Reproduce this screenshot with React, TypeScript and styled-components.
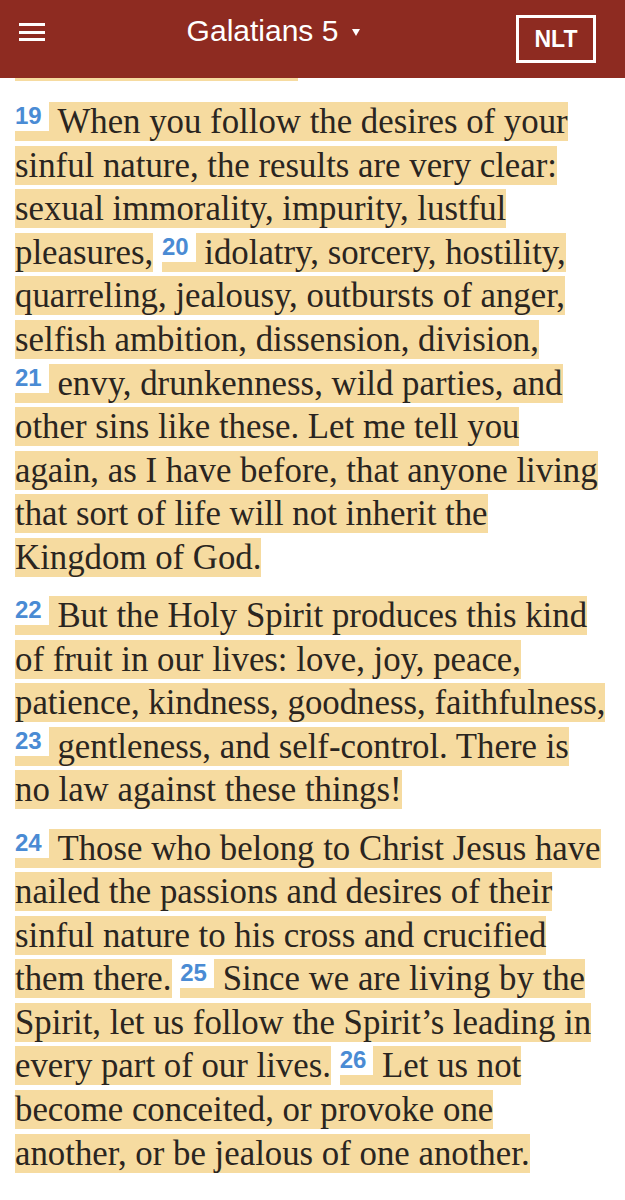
import styled, { createGlobalStyle } from 'styled-components';

const GlobalStyle = createGlobalStyle`
  body {
    margin: 0;
    background: #fff;
  }
`;

const Page = styled.div`
  width: 625px;
  min-height: 1200px;
  background: #fff;
  overflow: hidden;
`;

const Header = styled.header`
  height: 78px;
  background-color: #8e2b21;
  display: flex;
  align-items: flex-start;
  justify-content: space-between;
  padding: 0 29px 0 19px;
  box-sizing: border-box;
  color: #fff;
`;

const MenuButton = styled.div`
  width: 26px;
  height: 18px;
  margin-top: 23px;
  display: flex;
  flex-direction: column;
  justify-content: space-between;

  span {
    display: block;
    height: 3px;
    background: #fff;
  }
`;

const Title = styled.div`
  font-family: "Liberation Sans", Arial, sans-serif;
  font-size: 30px;
  margin-top: 14px;
  margin-right: 14px;
  display: flex;
  align-items: center;
  gap: 14px;
`;

const Caret = styled.span`
  width: 0;
  height: 0;
  border-left: 4px solid transparent;
  border-right: 4px solid transparent;
  border-top: 7px solid #fff;
  margin-top: 2px;
`;

const VersionBox = styled.div`
  width: 80px;
  height: 48px;
  margin-top: 15px;
  box-sizing: border-box;
  border: 3px solid #fff;
  display: flex;
  align-items: center;
  justify-content: center;
  font-family: "Liberation Sans", Arial, sans-serif;
  font-weight: bold;
  font-size: 23px;
`;

const PrevLine = styled.div`
  width: 283px;
  height: 3px;
  margin-left: 15px;
  background: #f6dba0;
`;

const Content = styled.main`
  padding: 19px 15px 0 15px;
  font-family: "Liberation Serif", "Times New Roman", serif;
  font-size: 34.8px;
  line-height: 43.6px;
  color: #2a2520;
`;

const Paragraph = styled.p`
  margin: 0 0 14.5px 0;
`;

const Verse = styled.span`
  background: #f6dba0;
`;

const Num = styled.span`
  font-family: "Liberation Sans", Arial, sans-serif;
  font-weight: bold;
  font-size: 24px;
  line-height: 0;
  color: #4a8bd4;
  background: #fff;
  vertical-align: 9px;
  padding: 2px 7px 2px 0;
`;

type VerseData = { n: number; text: string };

const paragraphs: VerseData[][] = [
  [
    { n: 19, text: 'When you follow the desires of your sinful nature, the results are very clear: sexual immorality, impurity, lustful pleasures,' },
    { n: 20, text: 'idolatry, sorcery, hostility, quarreling, jealousy, outbursts of anger, selfish ambition, dissension, division,' },
    { n: 21, text: 'envy, drunkenness, wild parties, and other sins like these. Let me tell you again, as I have before, that anyone living that sort of life will not inherit the Kingdom of God.' },
  ],
  [
    { n: 22, text: 'But the Holy Spirit produces this kind of fruit in our lives: love, joy, peace, patience, kindness, goodness, faithfulness,' },
    { n: 23, text: 'gentleness, and self-control. There is no law against these things!' },
  ],
  [
    { n: 24, text: 'Those who belong to Christ Jesus have nailed the passions and desires of their sinful nature to his cross and crucified them there.' },
    { n: 25, text: 'Since we are living by the Spirit, let us follow the Spirit\u2019s leading in every part of our lives.' },
    { n: 26, text: 'Let us not become conceited, or provoke one another, or be jealous of one another.' },
  ],
];

export default function App() {
  return (
    <>
      <GlobalStyle />
      <Page>
        <Header>
          <MenuButton>
            <span />
            <span />
            <span />
          </MenuButton>
          <Title>
            Galatians 5
            <Caret />
          </Title>
          <VersionBox>NLT</VersionBox>
        </Header>
        <PrevLine />
        <Content>
          {paragraphs.map((p, i) => (
            <Paragraph key={i}>
              {p.map((v, j) => (
                <span key={v.n}>
                  {j > 0 && ' '}
                  <Verse>
                    <Num>{v.n}</Num>{'\u00a0'}{v.text}
                  </Verse>
                </span>
              ))}
            </Paragraph>
          ))}
        </Content>
      </Page>
    </>
  );
}
